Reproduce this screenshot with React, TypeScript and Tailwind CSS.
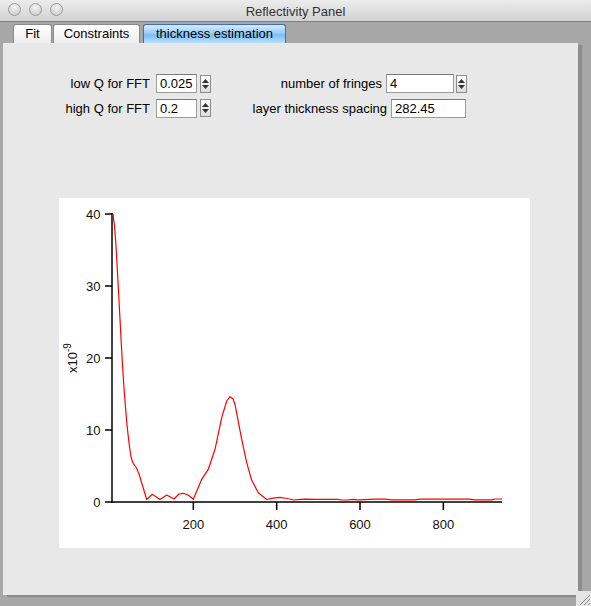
import React from 'react';

const CURVE: [number, number][] = [
  [113, 213], [114.5, 225], [116, 245], [117.3, 268], [118.6, 292], [120, 318],
  [121.3, 343], [122.6, 366], [124, 387], [125.4, 405], [127, 424], [129, 442],
  [131, 456], [133, 462], [136.5, 467], [139, 473], [146.7, 498.5], [152.3, 493.3],
  [160, 498.5], [166.7, 494], [174, 498], [179, 493], [183.3, 492.3], [188, 494],
  [193.3, 498.3], [201.7, 478.3], [208.3, 468.3], [215, 448.3], [221.7, 416.7],
  [226.7, 400], [230, 395.7], [233, 398], [235, 403.3], [241.7, 438.3],
  [246.7, 461.7], [251.7, 479.3], [258.3, 491.7], [266.7, 498.5], [273, 497.2],
  [280, 496.3], [287, 497.5], [294, 499], [300, 498.3], [305, 498.2],
  [315, 498.3], [338, 498.3], [342, 499], [347, 499], [353, 498.3],
  [357, 498.8], [365, 498.6], [375, 498.2], [385, 498.2], [392, 498.8],
  [405, 498.9], [415, 498.8], [420, 498.2], [440, 498.2], [470, 498.2],
  [475, 498.8], [492, 498.8], [495, 498], [502, 498],
];

const Y_TICKS = [0, 10, 20, 30, 40];
const X_TICKS = [200, 400, 600, 800];

const yOf = (v: number) => 304 - v * 7.2;
const xOf = (v: number) => 51 + v * 0.41667;

function Spinner() {
  return (
    <div className="w-[11px] h-[18px] bg-[linear-gradient(to_bottom,#ffffff,#dcdcdc)] border border-[#8c8c8c] flex flex-col items-center justify-center gap-[2px]">
      <svg width="7" height="4" viewBox="0 0 7 4"><path d="M3.5 0 L7 4 L0 4 Z" fill="#333" /></svg>
      <svg width="7" height="4" viewBox="0 0 7 4"><path d="M0 0 L7 0 L3.5 4 Z" fill="#333" /></svg>
    </div>
  );
}

function Field({ value, width }: { value: string; width: string }) {
  return (
    <div className={`${width} h-[19px] bg-white border border-[#9c9c9c] border-t-[#7a7a7a] pl-[3px] text-[13px] leading-[17px] text-black`}>
      {value}
    </div>
  );
}

function Chart() {
  return (
    <svg width="471" height="350" viewBox="0 0 471 350" className="block">
      <g stroke="#000" strokeWidth="1.5" fill="none">
        <line x1="53" y1="15" x2="53" y2="304.75" />
        <line x1="52.25" y1="304" x2="443" y2="304" />
        {Y_TICKS.map(v => (
          <line key={v} x1="46" y1={yOf(v)} x2="53" y2={yOf(v)} />
        ))}
        {X_TICKS.map(v => (
          <line key={v} x1={xOf(v)} y1="304" x2={xOf(v)} y2="312" />
        ))}
      </g>
      <g fontFamily="'Liberation Sans', Arial, sans-serif" fontSize="13" fill="#111">
        {Y_TICKS.map(v => (
          <text key={v} x="41.5" y={yOf(v) + 4.5} textAnchor="end">{v}</text>
        ))}
        {X_TICKS.map(v => (
          <text key={v} x={xOf(v)} y="331" textAnchor="middle">{v}</text>
        ))}
        <text transform="translate(18 160) rotate(-90)" textAnchor="middle">
          x10<tspan dy="-6" fontSize="10">-9</tspan>
        </text>
      </g>
      <g transform="translate(-59 -197)">
        <polyline
          points={CURVE.map(p => p.join(',')).join(' ')}
          fill="none"
          stroke="#ff0000"
          strokeWidth="1.2"
          strokeLinejoin="round"
        />
      </g>
    </svg>
  );
}

export default function App() {
  return (
    <div className="relative w-[591px] h-[606px] bg-[#a7a7a7] flex flex-col overflow-hidden font-['Liberation_Sans',Arial,sans-serif]">
      <div className="h-[22px] shrink-0 relative flex items-center justify-center bg-[linear-gradient(to_bottom,#ececec,#d2d2d2)] border-b border-[#7f7f7f]">
        <div className="absolute left-[8px] top-[3px] flex gap-[8px]">
          {[0, 1, 2].map(i => (
            <div
              key={i}
              className="w-[13px] h-[13px] rounded-full border border-[#9a9a9a] bg-[radial-gradient(circle_at_50%_30%,#f4f4f4,#c6c6c6)]"
            />
          ))}
        </div>
        <span className="text-[13px] text-[#333] leading-none pt-[1px]">Reflectivity Panel</span>
      </div>

      <div className="h-[20px] mt-[1px] pl-[13px] flex items-end gap-[1px] shrink-0">
        <div className="w-[39px] h-[19px] rounded-t-[3px] border border-b-0 border-[#8a8a8a] bg-[linear-gradient(to_bottom,#ffffff,#ededed)] text-[13px] text-black flex items-center justify-center">
          Fit
        </div>
        <div className="w-[87px] h-[19px] rounded-t-[3px] border border-b-0 border-[#8a8a8a] bg-[linear-gradient(to_bottom,#ffffff,#ededed)] text-[13px] text-black flex items-center justify-center">
          Constraints
        </div>
        <div className="ml-[2px] w-[143px] h-[19px] rounded-t-[3px] border border-b-0 border-[#3a6fc3] bg-[linear-gradient(to_bottom,#d6ebfd,#9ccdf8_45%,#7bbdf4_55%,#b8e0fd)] text-[13px] text-black flex items-center justify-center">
          thickness estimation
        </div>
      </div>

      <div className="ml-[3px] w-[575px] h-[552px] shrink-0 bg-[#e8e8e8] shadow-[4px_2px_1px_#8d8d8d] flex flex-col">
        <div className="mt-[31px] flex text-[13px] text-black">
          <div className="ml-[60px] flex flex-col gap-[5px]">
            <div className="flex items-center">
              <span className="w-[87px] text-right">low Q for FFT</span>
              <div className="ml-[6px]"><Field value="0.025" width="w-[41px]" /></div>
              <div className="ml-[3px]"><Spinner /></div>
            </div>
            <div className="flex items-center">
              <span className="w-[87px] text-right">high Q for FFT</span>
              <div className="ml-[6px]"><Field value="0.2" width="w-[41px]" /></div>
              <div className="ml-[3px]"><Spinner /></div>
            </div>
          </div>
          <div className="ml-[16px] flex flex-col gap-[5px]">
            <div className="flex items-center">
              <span className="w-[155px] text-right">number of fringes</span>
              <div className="ml-[4px]"><Field value="4" width="w-[68px]" /></div>
              <div className="ml-[2px]"><Spinner /></div>
            </div>
            <div className="flex items-center">
              <span className="w-[160px] text-right">layer thickness spacing</span>
              <div className="ml-[4px]"><Field value="282.45" width="w-[75px]" /></div>
            </div>
          </div>
        </div>

        <div className="mt-[80px] ml-[56px] w-[471px] h-[350px] bg-white">
          <Chart />
        </div>
      </div>

      <div className="absolute right-0 bottom-0 w-[15px] h-[15px] bg-[#e4e4e4]">
        <svg width="15" height="15" viewBox="0 0 15 15">
          <g stroke="#8a8a8a" strokeWidth="1">
            <line x1="4" y1="14" x2="14" y2="4" />
            <line x1="8" y1="14" x2="14" y2="8" />
            <line x1="12" y1="14" x2="14" y2="12" />
          </g>
        </svg>
      </div>
    </div>
  );
}
